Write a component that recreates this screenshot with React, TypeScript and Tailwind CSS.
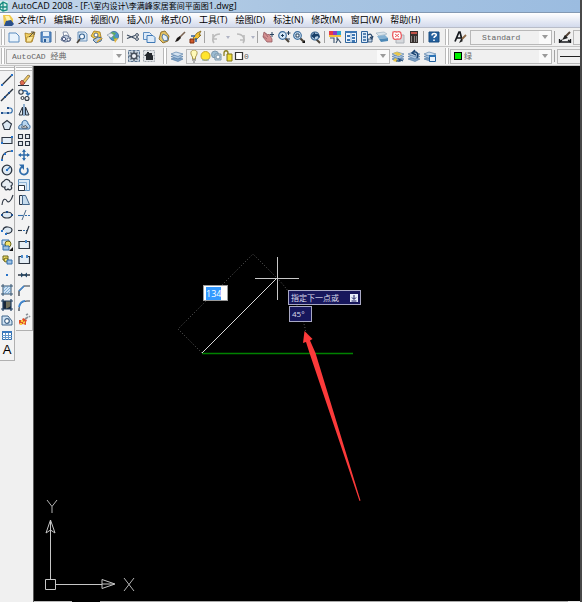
import { useEffect, useRef, type ReactNode } from 'react'

// ─────────────────────────────────────────────────────────────────────────
// Classic CAD workspace: title, menu bar, two toolbar rows, the draw / modify
// palettes down the left side and the model space canvas.
// ─────────────────────────────────────────────────────────────────────────

const MENUS = [
  '文件(F)', '编辑(E)', '视图(V)', '插入(I)', '格式(O)', '工具(T)',
  '绘图(D)', '标注(N)', '修改(M)', '窗口(W)', '帮助(H)',
]

const BLUE = '#2f6cab'
const INK = '#2b3440'
const PALE = '#cfe2f3'

const LAYERS = (
  <>
    <path d="M1 10l5-2 7 2-5 2.500z" fill="#7fa3c7" stroke="#47729f" strokeWidth=".6" />
    <path d="M1 7.500l5-2 7 2-5 2.500z" fill="#a9c4de" stroke="#47729f" strokeWidth=".6" />
    <path d="M1 5l5-2 7 2-5 2.500z" fill="#d3e2f0" stroke="#47729f" strokeWidth=".6" />
  </>
)

const LENS = (
  <>
    <path d="M8 8l4 4" stroke="#4c453b" strokeWidth="2.200" />
    <circle cx="5.500" cy="5.500" r="3.800" fill="#d6e8f6" stroke="#3d6e9e" strokeWidth="1.200" />
  </>
)

// Every drawing uses a 14 x 14 box.
const ICONS: Record<string, ReactNode> = {
  新建: <path d="M2 3h7l3 3v6H2z" fill="#e9f3fc" stroke="#5b8cc0" />,
  打开: (
    <>
      <path d="M2 3l4 1 6-2-3 10-6 0z" fill="#f0cf62" stroke="#a37a1a" strokeWidth=".8" />
      <path d="M4 7l7-1-3 6H3z" fill="#fbe79a" stroke="#a37a1a" strokeWidth=".7" />
      <path d="M6 7l5-5M8 2h3v3" stroke="#5a5340" fill="none" />
    </>
  ),
  保存: (
    <>
      <path d="M2 2h10v10H2z" fill="#5f90c8" stroke="#3b6ca5" />
      <path d="M4 2h6v4H4z" fill="#e7f0f8" />
      <path d="M4 8h6v4H4z" fill="#c5d8ea" />
      <path d="M5 9h2v3H5z" fill="#2b5d96" />
    </>
  ),
  打印: (
    <>
      <path d="M4 2l4 0 2 4-5 1z" fill="#fff" stroke="#6c7b98" strokeWidth=".8" />
      <path d="M3 7l4-2 5 3-1 3-5 1-4-2z" fill="#c4cfdf" stroke="#566787" strokeWidth=".9" />
      <circle cx="5" cy="9" r="1.700" fill="#eef" stroke="#4f5f80" />
      <circle cx="9.500" cy="9.500" r="1.500" fill="#fff" stroke="#4f5f80" />
    </>
  ),
  打印预览: (
    <>
      <path d="M3 2h7l2 2v7H3z" fill="#dbe9f6" stroke="#6b91b8" />
      <circle cx="7" cy="6.500" r="2.500" fill="#f5faff" stroke="#34628f" strokeWidth="1.100" />
      <path d="M5 9l-3 4" stroke="#4c453b" strokeWidth="1.700" />
    </>
  ),
  发布: (
    <>
      <path d="M4 1l6 1 1 5-6 2-4-3z" fill="#f4cc4a" stroke="#a07618" strokeWidth=".8" />
      <circle cx="6" cy="5" r="2" fill="#fff" stroke="#576b84" />
      <path d="M3 10l5-3 4 1-1 3-5 2z" fill="#b3c8dd" stroke="#3c5f84" strokeWidth=".9" />
      <path d="M7 12l5-4" stroke="#e3aa2a" strokeWidth="1.500" />
    </>
  ),
  三维DWF: (
    <>
      <circle cx="8" cy="6" r="4.600" fill="#4d94ca" stroke="#2d628f" strokeWidth=".7" />
      <path d="M6 2l4 1-2 3 3 3-3 1-1-3-3-2z" fill="#5fae5b" />
      <path d="M1 5l4-2 3 2-3 3z" fill="#e7edf3" stroke="#7d8b99" strokeWidth=".6" />
      <path d="M8 9l4-1-3 5z" fill="#e6b53c" />
    </>
  ),
  剪切: (
    <>
      <path d="M1 5l8 3.500M1 8.500l8-3" stroke="#39495e" strokeWidth="1.100" />
      <circle cx="11" cy="5" r="1.400" fill="none" stroke="#39495e" />
      <circle cx="11" cy="9" r="1.400" fill="none" stroke="#39495e" />
    </>
  ),
  复制到剪贴板: (
    <>
      <path d="M1.500 2.500h6l2 2v5h-8z" fill="#dceaf8" stroke="#5b8cc0" />
      <path d="M5 5.500h6l2 2v5H5z" fill="#dceaf8" stroke="#3f78b5" />
    </>
  ),
  粘贴: (
    <>
      <path d="M4 2l4-1 4 5-1 5-5 2-4-4z" fill="#e3c264" stroke="#8a6a25" strokeWidth=".9" />
      <path d="M6 4l4 2 1 4-4 1-2-4z" fill="#e6f0fa" stroke="#47729f" strokeWidth=".9" />
    </>
  ),
  特性匹配: (
    <>
      <path d="M7 7l5-5" stroke="#7b6554" strokeWidth="1.600" />
      <path d="M2 12l2-4 3-2 1 2-3 3z" fill="#1e1a18" />
    </>
  ),
  块编辑器: (
    <>
      <path d="M2 9h4v4H2z" fill="#d35a2a" stroke="#7b2c10" />
      <path d="M5 8l4-5 4-2-2 4h2L8 10z" fill="#f3c333" stroke="#7e6215" strokeWidth=".8" />
      <path d="M3 6h4M8 8v4" stroke="#2f5f9d" strokeWidth="1.500" />
    </>
  ),
  放弃: <path d="M5 13c-3-4 0-9 6-9M4 4v5h4" fill="none" stroke="#bcbcbc" strokeWidth="1.600" />,
  重做: <path d="M9 13c3-4 0-9-6-9M10 5v5H6" fill="none" stroke="#bcbcbc" strokeWidth="1.600" />,
  实时平移: (
    <>
      <path d="M3 2l4 3 1-1 3 5 0 3-5 0-4-5z" fill="#d49090" stroke="#955c62" strokeWidth=".8" />
      <path d="M11 2v5M9 4.500h4" stroke="#26435f" />
      <path d="M4 3l3 4M2 6l4 3" stroke="#a66970" />
    </>
  ),
  实时缩放: (
    <>
      {LENS}
      <path d="M4 5.500h3M5.500 4v3M9.500 3h4M11.500 1v4M10 9h3" stroke="#1d3d5c" />
    </>
  ),
  窗口缩放: (
    <>
      {LENS}
      <path d="M4 4h3v3H4z" fill="#fff" stroke="#1d3d5c" />
      <path d="M13 10v3h-3z" fill="#111" />
    </>
  ),
  缩放上一个: (
    <>
      <path d="M8 9l4 4" stroke="#4c453b" strokeWidth="2" />
      <circle cx="7" cy="6" r="4" fill="#b9d1e6" stroke="#35618c" strokeWidth="1.200" />
      <path d="M3 6l4-4v2c3-1 5 1 5 4-2-2-3-2-5-1v2z" fill="#183f68" />
    </>
  ),
  特性: (
    <>
      <path d="M1 1h4v4H1z" fill="#e83c45" />
      <path d="M5 1h4v4H5z" fill="#8a3bc5" />
      <path d="M9 1h4v4H9z" fill="#2da8d0" />
      <path d="M1 5h12v2H1z" fill="#f4c23c" />
      <path d="M2 8h4v5M9 7v3M8 13l2-4 3 4" fill="none" stroke="#3a536e" strokeWidth="1.100" />
    </>
  ),
  设计中心: (
    <>
      <path d="M1.500 1.500h11v11h-11z" fill="#eef5fc" stroke="#2f649c" />
      <path d="M1 1h12v2H1z" fill="#3d77b4" />
      <path d="M3 5h3v2H3zM3 9h3v2H3zM8 4h3v2H8zM8 7h3v2H8zM8 10h3v2H8z" fill="#3d77b4" />
      <path d="M7 3v10" stroke="#8fb2d5" />
    </>
  ),
  工具选项板: (
    <>
      <path d="M1.500 1.500h6v11h-6z" fill="#dceaf8" stroke="#2f649c" />
      <path d="M3 4h3M3 7h3M3 10h3" stroke="#2f649c" strokeWidth="1.500" />
      <path d="M8 5c3-2 4 0 4 3M10 7l2 2 1-3" fill="none" stroke="#29486b" strokeWidth="1.200" />
      <path d="M8 9h4v3H8z" fill="#c9dbed" stroke="#29486b" strokeWidth=".8" />
    </>
  ),
  图纸集管理器: (
    <>
      <path d="M1 3l8-1 3 2-8 2z" fill="#d9e4eb" stroke="#93a9ba" strokeWidth=".6" />
      <path d="M2 6l8-1 3 3-9 1z" fill="#84b1d2" />
      <path d="M4 9l9-1v3l-7 1z" fill="#4c88b6" />
    </>
  ),
  标记集管理器: (
    <>
      <path d="M5 5h8v8H5z" fill="#d6d9dd" stroke="#adb2b8" />
      <path d="M2 2c2-1 3 0 4 0 2-1 4 0 4 2 1 2 0 3 0 4-1 2-3 1-4 1-2 1-4 0-4-2-1-2 0-3 0-5z" fill="#fff" stroke="#ea5a5f" strokeWidth="1.300" />
      <path d="M4 4l4 3M8 4L4 7" stroke="#ea5a5f" />
    </>
  ),
  快速计算器: (
    <>
      <path d="M3 1h8v12H3z" fill="#37302e" />
      <path d="M4 2h6v2H4z" fill="#c25147" />
      <path d="M4 7h1M7 7h1M9 7h1M4 9h1M7 9h1M9 9h1M4 11h1M7 11h1M9 11h1" stroke="#ddd" strokeWidth="1.200" />
    </>
  ),
  帮助: (
    <>
      <path d="M2 2h10v10H2z" fill="#24619e" stroke="#174a7e" />
      <path d="M5 5.500c0-3 4.500-2.500 4.300-.5 0 1.500-2.300 1-2.300 3M7 9.500V11" fill="none" stroke="#fff" strokeWidth="1.500" />
    </>
  ),
  文字样式: (
    <>
      <path d="M2 11.500L6 2h1l2 8M3 8h5" fill="none" stroke="#15181d" strokeWidth="1.700" />
      <path d="M9 9l4-4" stroke="#8d6a49" strokeWidth="1.800" />
      <path d="M6 13l2-4 2 2z" fill="#222" />
    </>
  ),
  标注样式: (
    <>
      <path d="M1 12h12M1.500 9v4M12.500 9v4M1 12l3-2M13 12l-3-2" stroke="#17191c" strokeWidth="1.300" />
      <path d="M7 7l5-5" stroke="#544336" strokeWidth="2" />
      <path d="M4 10l3-5 3 3z" fill="#222" />
    </>
  ),
  工作空间设置: (
    <>
      <path d="M1.500 1.500h11v11h-11z" fill="#c6d4e0" stroke="#5a7490" strokeDasharray="3 1" />
      <circle cx="7" cy="7" r="2.800" fill="#edf1f5" stroke="#47515c" strokeWidth="1.500" />
      <path d="M7 2v2M7 10v2M2 7h2M10 7h2M3.500 3.500L5 5M9 9l1.500 1.500M10.500 3.500L9 5M5 9l-1.500 1.500" stroke="#47515c" strokeWidth="1.200" />
    </>
  ),
  我的工作空间: (
    <>
      <path d="M1.500 1.500h11v11h-11z" fill="#e2e5e8" stroke="#a4aab1" strokeDasharray="2 1" />
      <path d="M2 7l3-3v-1h2v1l3 0v2l2 1h-1v4H4V7z" fill="#23272c" />
    </>
  ),
  图层特性: LAYERS,
  置为当前: (
    <>
      {LAYERS}
      <path d="M2 4l4-1 5 2-4 2z" fill="#e9c648" />
      <path d="M2 12l2-3 2 1 0 3z" fill="#e9c648" />
      <path d="M5 12h4l-1-2 4 2" fill="none" stroke="#294e77" strokeWidth="1.200" />
    </>
  ),
  上一个图层: (
    <>
      {LAYERS}
      <path d="M10 9c2-4 0-7-4-6M8 1L5 4l4 2" fill="none" stroke="#1d4775" strokeWidth="1.500" />
    </>
  ),
  图层状态: (
    <>
      {LAYERS}
      <path d="M6.500 6.500h6v6h-6z" fill="#eaf3fb" stroke="#26639f" />
      <path d="M6 6h7v2H6z" fill="#2c73b5" />
    </>
  ),
  直线: (
    <>
      <path d="M2 12L12 2" stroke={INK} strokeWidth="1.200" />
      <path d="M1 11h2v2H1zM11 1h2v2h-2z" fill="#2772c8" />
    </>
  ),
  构造线: (
    <>
      <path d="M1 13L13 1" stroke={INK} strokeWidth="1.400" />
      <path d="M4 8h2v2H4zM8 4h2v2H8z" fill="#1f4f8c" />
    </>
  ),
  多段线: (
    <>
      <path d="M2 10h8c3 0 3-5 0-5H8" fill="none" stroke={BLUE} strokeWidth="1.200" />
      <path d="M1 9h2v2H1zM7 9h2v2H7zM7 4h2v2H7z" fill="#1f4f8c" />
    </>
  ),
  正多边形: <path d="M7 2.500l4.500 3.500-2 5.500h-5L2.500 6z" fill="#dce8f2" stroke={INK} strokeWidth="1.100" />,
  矩形: (
    <>
      <path d="M2 4.500h10v6H2z" fill="#e4eef7" stroke={INK} strokeWidth="1.100" />
      <path d="M1 9h2v2H1zM11 3h2v2h-2z" fill="#2772c8" />
    </>
  ),
  圆弧: (
    <>
      <path d="M2 12c0-6 4-9 10-9" fill="none" stroke={INK} strokeWidth="1.200" />
      <path d="M1 11h2v2H1zM4 5h2v2H4zM11 2h2v2h-2z" fill="#2772c8" />
    </>
  ),
  圆: (
    <>
      <circle cx="7" cy="7" r="4.800" fill="#dce8f2" stroke={INK} strokeWidth="1.300" />
      <path d="M7 7l3-3" stroke={BLUE} strokeWidth="1.200" />
      <path d="M6 6h2v2H6z" fill="#2772c8" />
    </>
  ),
  修订云线: (
    <path
      d="M4 3c2-3 6-1 6 1 3 0 3 3 1 4 2 3-1 5-3 3-2 2-4 0-3-2-4 1-5-4-1-6z"
      fill="#e6edf3"
      stroke={INK}
      strokeWidth="1.200"
    />
  ),
  样条曲线: <path d="M2 12c1-8 4-6 5-4s4 1 6-6" fill="none" stroke={INK} strokeWidth="1.100" />,
  椭圆: (
    <>
      <ellipse cx="7" cy="7" rx="4.800" ry="3" fill="#dce8f2" stroke={INK} strokeWidth="1.200" />
      <path d="M1 6h2v2H1zM6 3h2v2H6zM11 6h2v2h-2z" fill="#1f4f8c" />
    </>
  ),
  椭圆弧: (
    <>
      <path d="M3 7c1-5 9-3 9 0 0 3-4 4-6 3" fill="#dce8f2" stroke={INK} strokeWidth="1.200" />
      <path d="M1 7h2v2H1zM5 10h2v2H5z" fill="#2772c8" />
    </>
  ),
  插入块: (
    <>
      <path d="M2 2h7v5H2z" fill="#cfe2f3" stroke={BLUE} />
      <circle cx="8" cy="6" r="3" fill="#f5e36b" stroke="#686319" />
      <path d="M3 8h6v4H3z" fill="#9ec2e3" stroke={BLUE} />
      <path d="M13 9v4H9z" fill="#111" />
    </>
  ),
  创建块: (
    <>
      <path d="M3 3h5v4H3z" fill="#f5e36b" stroke="#686319" />
      <circle cx="6" cy="7" r="2" fill="#f5e36b" stroke="#686319" />
      <path d="M7 7h5v4H7z" fill="#9ec2e3" stroke={BLUE} />
    </>
  ),
  点: <path d="M6 6h2v2H6z" fill="#2772c8" />,
  图案填充: (
    <>
      <path d="M3 3h8v8H3z" fill={PALE} />
      <path d="M3 1v12M11 1v12M1 3h12M1 11h12" stroke="#34536f" />
      <path d="M3 6l3-3M3 9l6-6M4 11l7-7M7 11l4-4" stroke="#6c9fcb" strokeWidth=".8" />
    </>
  ),
  渐变色: (
    <>
      <path d="M3 3h8v8H3z" fill="#1b2737" />
      <path d="M6 3h5v5L6 11z" fill="#72705c" />
      <path d="M3 1v12M11 1v12M1 3h12M1 11h12" stroke="#1f3d5f" strokeWidth="1.200" />
    </>
  ),
  面域: (
    <>
      <path d="M2 3h6l4 5v4H2z" fill={PALE} stroke="#3d6288" />
      <circle cx="7" cy="8" r="2.300" fill="#fff" stroke="#3d6288" strokeWidth="1.200" />
    </>
  ),
  表格: (
    <>
      <path d="M2.500 3.500h9v8h-9z" fill="#fff" stroke={BLUE} />
      <path d="M2 3h10v2H2z" fill="#3b79bd" />
      <path d="M5.500 5v7M8.500 5v7M2 7.500h10M2 9.500h10" stroke="#6497ca" />
    </>
  ),
  删除: (
    <>
      <path d="M5 9l6-7 2 1-6 8z" fill="#f0ca65" stroke="#7c653b" strokeWidth=".8" />
      <path d="M3 9l2-2 3 3-2 2H4z" fill="#dd6a50" stroke="#87362a" strokeWidth=".7" />
      <path d="M1 12.500h11" stroke={INK} />
    </>
  ),
  复制: (
    <>
      <circle cx="4" cy="4" r="2.200" fill="#eee" stroke={INK} strokeWidth="1.100" />
      <circle cx="5.500" cy="10" r="1.500" fill="#eee" stroke={INK} />
      <circle cx="10" cy="10.500" r="2" fill="#eee" stroke={INK} strokeWidth="1.100" />
      <path d="M6 3c4-1 5 1 5 4M9 5l2 2 2-2" fill="none" stroke={BLUE} strokeWidth="1.400" />
    </>
  ),
  镜像: (
    <>
      <path d="M5.500 4v8H2z" fill="#e5ebf0" stroke={INK} />
      <path d="M8.500 4v8H12z" fill="#b6cde2" stroke={INK} />
      <path d="M7 1v12" stroke={BLUE} />
    </>
  ),
  偏移: (
    <>
      <path d="M2 11c-1-3 1-5 3-4-1-6 6-6 6-1 3 1 2 5 1 5z" fill="#b9d5ee" stroke="#2c6299" />
      <path d="M5 10c-1-2 1-3 2-1 0-2 3-2 2 0 2 0 2 1 1 1z" fill="#fff" stroke={INK} strokeWidth=".8" />
    </>
  ),
  阵列: (
    <path
      d="M1.500 1.500h4v4h-4zM8.500 1.500h4v4h-4zM1.500 8.500h4v4h-4zM8.500 8.500h4v4h-4z"
      fill="#e5ebf0"
      stroke={INK}
      strokeWidth="1.100"
    />
  ),
  移动: (
    <>
      <path d="M7 2v10M2 7h10" stroke={BLUE} strokeWidth="1.500" />
      <path d="M7 1l2 3H5zM7 13l2-3H5zM1 7l3-2v4zM13 7l-3-2v4z" fill={BLUE} />
    </>
  ),
  旋转: (
    <>
      <path d="M5 4a4 4 0 1 0 5 1" fill="none" stroke={BLUE} strokeWidth="1.800" />
      <path d="M2 1.500h5V7z" fill={BLUE} />
    </>
  ),
  缩放: (
    <>
      <path d="M1.500 1.500h11v11h-11z" fill="#dceaf6" stroke="#5d8fbd" />
      <path d="M1.500 7.500h6v5h-6z" fill="#fff" stroke={INK} />
      <path d="M1.500 4.500h8v8" fill="none" stroke="#8fb4d6" />
    </>
  ),
  拉伸: (
    <>
      <path d="M2.500 2.500h3v9h-3z" fill="#e5ebf0" stroke={INK} />
      <path d="M5.500 2.500h3l4 9h-7z" fill="#c7dced" stroke="#44678b" />
    </>
  ),
  修剪: (
    <>
      <path d="M1 7.500h5" stroke={BLUE} strokeWidth="1.100" />
      <path d="M8 7.500h5" stroke={BLUE} strokeDasharray="2 1" />
      <path d="M5 12l4-10" stroke="#4b6a89" />
    </>
  ),
  延伸: (
    <>
      <path d="M1 7.500h4" stroke={INK} strokeWidth="1.100" />
      <path d="M6 7.500h4" stroke={BLUE} strokeDasharray="2 1" />
      <path d="M9 11l3-8" stroke={INK} strokeWidth="1.200" />
    </>
  ),
  打断于点: (
    <>
      <path d="M2 3.500h10.500v7H2z" fill="#e5eef6" stroke={INK} strokeWidth="1.200" />
      <path d="M8 2h2v3H8z" fill="#4b8acb" />
    </>
  ),
  打断: (
    <>
      <path d="M4 3.500H2v7h10.500v-7H10" fill="#e5eef6" stroke={INK} strokeWidth="1.200" />
      <path d="M4 2h2v3H4zM9 2h2v3H9z" fill="#4b8acb" />
    </>
  ),
  合并: (
    <>
      <path d="M1 7h12" stroke={INK} strokeWidth="1.500" />
      <path d="M4 4.500L7 7 4 9.500zM10 4.500L7 7l3 2.500z" fill="#254765" />
    </>
  ),
  倒角: (
    <>
      <path d="M2 13V8l5-5h6" fill="none" stroke={INK} strokeWidth="1.200" />
      <path d="M2 8l5-5" stroke="#3f86cf" strokeWidth="1.500" />
    </>
  ),
  圆角: (
    <>
      <path d="M2 13v-2c0-5 3-8 8-8h3" fill="none" stroke={INK} strokeWidth="1.200" />
      <path d="M2 9c1-4 3-6 6-6" fill="none" stroke="#3f86cf" strokeWidth="1.900" />
    </>
  ),
  分解: (
    <>
      <path d="M2 7l3 0 1-2 2 1 2 1-1 2 0 3-3-1-3 1-1-2z" fill="#e14c26" />
      <path d="M4 7l2 0 0 2-2 0zM6 9l2-1 0 2-2 1zM3 10h2v2H3z" fill="#f8cf3e" />
      <path d="M8 6l3-2M12 4l1-1M9 2l2-1" stroke="#8a9097" strokeWidth="1.700" />
    </>
  ),
}

function Icon({ name }: { name: string }) {
  return (
    <svg viewBox="0 0 14 14" className="block size-[14px] shrink-0" aria-hidden="true">
      {ICONS[name]}
    </svg>
  )
}

function ToolButton({ name }: { name: string }) {
  return (
    <button type="button" aria-label={name} className="block size-[14px] shrink-0">
      <Icon name={name} />
    </button>
  )
}

function Grip() {
  return <div className="mx-px h-4 w-[4px] shrink-0 border-x border-[#b9b9b9] bg-white" />
}

function Divider() {
  return <div className="mx-[2px] h-3 w-px shrink-0 bg-[#a3a3a3]" />
}

function Chevron() {
  return (
    <span className="pointer-events-none flex h-full w-3 shrink-0 items-center justify-center bg-[#fafafa]">
      <svg viewBox="0 0 6 4" className="h-[4px] w-[6px]" aria-hidden="true">
        <path d="M0 0h6L3 4z" fill="#9a9a9a" />
      </svg>
    </span>
  )
}

function DropMark() {
  return (
    <svg viewBox="0 0 4 3" className="h-[3px] w-[4px] shrink-0" aria-hidden="true">
      <path d="M0 0h4L2 3z" fill="#b0b4c4" />
    </svg>
  )
}

function Combo({ label, value, className, children }: {
  label: string
  value: string
  className: string
  children?: ReactNode
}) {
  return (
    <div className={`flex h-[15px] shrink-0 items-center overflow-hidden border border-[#b8b8b8] bg-[#f0f0f0] ${className}`}>
      {children}
      <select
        aria-label={label}
        defaultValue={value}
        className="h-full min-w-0 flex-1 appearance-none bg-transparent font-['Liberation_Mono','Noto_Sans_CJK_SC',monospace] text-[8px] leading-[13px] text-[#666] outline-none"
      >
        <option>{value}</option>
      </select>
      <Chevron />
    </div>
  )
}

function LayerFlags() {
  return (
    <svg viewBox="0 0 56 14" className="h-[14px] w-14 shrink-0" aria-hidden="true">
      <path d="M4.500 8C1 3 4 1 6 1s5 2 1.500 7v2h-3z" fill="#fff9b8" stroke="#a8964d" />
      <path d="M4 11h4M5 13h2" stroke="#707070" />
      <circle cx="17.500" cy="7" r="4.500" fill="#ffe52e" stroke="#c9a427" />
      <path d="M14 11h7" stroke="#7ba2bf" />
      <circle cx="27" cy="5.500" r="3.500" fill="#9bbbd2" stroke="#7c98ae" />
      <path d="M27 5h6v6h-6z" fill="#cfdde7" stroke="#7895ab" />
      <circle cx="30" cy="8" r="2" fill="#fff" stroke="#7895ab" />
      <path d="M36 7V4c0-3 4-3 4 0v3" fill="none" stroke="#8a7e1e" strokeWidth="1.300" />
      <path d="M39 5h5v7h-5z" fill="#f0df37" stroke="#827419" />
      <path d="M47.500 3.500h7v7h-7z" fill="#fff" stroke="#333" strokeWidth="1.200" />
    </svg>
  )
}

const DRAW_TOOLS = [
  '直线', '构造线', '多段线', '正多边形', '矩形', '圆弧', '圆', '修订云线', '样条曲线',
  '椭圆', '椭圆弧', '插入块', '创建块', '点', '图案填充', '渐变色', '面域', '表格',
]

const MODIFY_TOOLS = [
  '删除', '复制', '镜像', '偏移', '阵列', '移动', '旋转', '缩放', '拉伸',
  '修剪', '延伸', '打断于点', '打断', '合并', '倒角', '圆角', '分解',
]

function Group({ names, className }: { names: string[]; className: string }) {
  return (
    <div className={`flex shrink-0 items-center justify-between ${className}`}>
      {names.map(n => <ToolButton key={n} name={n} />)}
    </div>
  )
}

function Palette({ names, className, children }: { names: string[]; className: string; children?: ReactNode }) {
  return (
    <div className={`flex flex-col items-center border-r border-b border-[#b0b0b0] bg-[#f3f3f3] pb-[3px] ${className}`}>
      <div className="mt-px mb-px h-[4px] w-full border-y border-[#b9b9b9] bg-white" />
      {names.map(n => (
        <div key={n} className="flex h-[15px] items-center">
          <ToolButton name={n} />
        </div>
      ))}
      {children}
    </div>
  )
}

function ModelSpace() {
  const lengthRef = useRef<HTMLInputElement>(null)

  // The dynamic length field opens with its value selected.
  useEffect(() => {
    lengthRef.current?.focus()
    lengthRef.current?.select()
  }, [])

  return (
    <main className="relative flex flex-1 flex-col overflow-hidden border-l border-[#5a5a5a] bg-black">
      <svg viewBox="0 0 546 535" className="h-[535px] w-[546px] shrink-0" fill="none" aria-hidden="true">
        {/* tracking outline */}
        <path d="M168 287L144 263L219 188L243 212" stroke="#5c5c5c" strokeDasharray="1 2" />
        <path d="M243 212Q268 238 272 268" stroke="#666" strokeDasharray="1 2" />
        {/* drawn segments */}
        <path d="M168 287.500h151" stroke="#008200" strokeWidth="1.500" />
        <path d="M168 287L243 212" stroke="#d8d8d8" />
        {/* cursor */}
        <path d="M221 212.500h44M243.500 191v43" stroke="#c8c8c8" />
        {/* pointer */}
        <path d="M270.500 265L278.500 273L276 274.500L281.500 287L326.500 434.500L325.500 435L275.500 287L272 276L269 277z" fill="#fb3a3a" />
        {/* UCS icon */}
        <path d="M11.500 513.500h10v10h-10zM16.500 513V467M22 518.500h46" stroke="#c6c6c6" />
        <path d="M12 467L16.500 454L21 467L16.500 464zM16.500 454v13M68 513.500L81 518L68 522.500zM68 518h12" stroke="#c6c6c6" />
        <path d="M13 434L18 440.500L23 434M18 440.500V447M90 512L100 525M100 512L90 525" stroke="#b4b4b4" />
      </svg>

      <input
        ref={lengthRef}
        aria-label="长度"
        defaultValue="134"
        className="absolute top-[219px] left-[169px] h-4 w-[25px] border border-[#999] bg-white px-[2px] font-['Open_Sans',sans-serif] text-[9px] leading-[13px] text-black outline-none selection:bg-[#3399ff] selection:text-white"
      />
      <div className="absolute top-[224px] left-[254px] flex h-[15px] w-[73px] items-center justify-between border border-[#a8a8c4] bg-[#17175c] px-[2px] text-[8px] leading-none text-[#dcdcea]">
        指定下一点或
        <svg viewBox="0 0 8 8" className="size-[8px]" aria-hidden="true">
          <path d="M0 0h8v8H0z" fill="#e8effb" />
          <path d="M4 1v4M2 3.500l2 2 2-2M1.500 7h5" fill="none" stroke="#17175c" />
        </svg>
      </div>
      <div className="absolute top-[240px] left-[255px] flex h-4 w-[23px] items-center border border-[#a8a8c4] bg-[#17175c] pl-[2px] text-[8px] leading-none text-[#dcdcea]">
        45°
      </div>

      {/* upper edge of the layout tab strip */}
      <div className="mt-auto flex h-px">
        <span className="w-[38px] bg-[#b9b9b9]" />
        <span className="w-7" />
        <span className="flex-1 bg-[#a9a9a9]" />
        <span className="w-3 bg-[#e8e8e8]" />
      </div>
    </main>
  )
}

export default function App() {
  return (
    <div className="flex min-h-screen overflow-hidden bg-[#484848] pr-[2px] font-['Open_Sans','Noto_Sans_CJK_SC',sans-serif] text-black">
      <div className="flex min-w-0 flex-1 flex-col overflow-hidden bg-[#f0f0f0]">
        <header className="flex h-[13px] items-center gap-1 overflow-hidden border-b border-[#8399b3] bg-linear-to-r from-[#c3d6ea] via-[#a9c5e2] to-[#9bbce0]">
          <svg viewBox="0 0 8 11" className="h-[11px] w-[8px] shrink-0" aria-hidden="true">
            <path d="M0 0h8v11H0z" fill="#d7efe9" />
            <path d="M0 4l3-3 4 2v6l-4 1-3-2zM3 1v9M0 6h7" fill="none" stroke="#178a80" strokeWidth="1.300" />
          </svg>
          <h1 className="text-[9px] leading-[12px] whitespace-nowrap">
            AutoCAD 2008 - [F:\<span className="text-[8px]">室内设计</span>\
            <span className="text-[8px]">李满峰家居套间平面图</span>1.dwg]
          </h1>
        </header>

        <nav className="flex h-[15px] items-center gap-[8px] overflow-hidden border-b border-[#b9bdc9] bg-linear-to-b from-white to-[#d3daec] pl-[3px]">
          <svg viewBox="0 0 11 12" className="-mr-[4px] h-3 w-[11px] shrink-0" aria-hidden="true">
            <path d="M0 1h7l3 4v6H1z" fill="#eec84c" />
            <path d="M2 2l4 0 2 4-4 1z" fill="#fff3ac" />
            <path d="M3 7l5-1 3 4-2 2H1z" fill="#294f8b" />
          </svg>
          {MENUS.map(m => (
            <button key={m} type="button" className="shrink-0 text-[9px] leading-[12px] whitespace-nowrap">
              {m}
            </button>
          ))}
        </nav>

        <div className="flex h-[19px] items-center overflow-hidden border-b border-[#c4c4c4]">
          <Grip />
          <Group names={['新建', '打开', '保存']} className="ml-px w-[46px]" />
          <Divider />
          <Group names={['打印', '打印预览', '发布', '三维DWF']} className="ml-px w-[61px]" />
          <Divider />
          <Group names={['剪切', '复制到剪贴板', '粘贴', '特性匹配', '块编辑器']} className="ml-px w-[76px]" />
          <Divider />
          <div className="ml-[2px] flex w-[46px] shrink-0 items-center justify-between">
            <ToolButton name="放弃" />
            <DropMark />
            <ToolButton name="重做" />
            <DropMark />
          </div>
          <Divider />
          <Group names={['实时平移', '实时缩放', '窗口缩放', '缩放上一个']} className="ml-px w-[61px]" />
          <Divider />
          <Group
            names={['特性', '设计中心', '工具选项板', '图纸集管理器', '标记集管理器', '快速计算器']}
            className="ml-px w-[93px]"
          />
          <Divider />
          <Group names={['帮助']} className="mx-px w-[16px]" />
          <Grip />
          <Group names={['文字样式']} className="mx-[3px] w-[14px]" />
          <Combo label="文字样式控制" value="Standard" className="w-[82px] pl-[11px]" />
          <Divider />
          <Group names={['标注样式']} className="mx-px w-[14px]" />
          <Combo label="标注样式控制" value="" className="w-[82px]" />
        </div>

        <div className="flex h-[19px] items-center overflow-hidden border-b border-[#c4c4c4]">
          <Grip />
          <Combo label="工作空间" value="AutoCAD 经典" className="w-[120px] pl-[5px]" />
          <Group names={['工作空间设置', '我的工作空间']} className="mr-[6px] ml-px w-[29px]" />
          <Grip />
          <Group names={['图层特性']} className="mx-[2px] w-[14px]" />
          <Combo label="图层" value="0" className="w-[204px] pl-px">
            <LayerFlags />
          </Combo>
          <Group names={['置为当前', '上一个图层', '图层状态']} className="mr-[7px] ml-px w-[46px]" />
          <Grip />
          <Combo label="颜色" value="绿" className="w-[102px] gap-[2px] pl-[3px]">
            <span className="size-[8px] shrink-0 border border-black bg-[#00f000]" />
          </Combo>
          <Divider />
          <div className="flex h-[15px] flex-1 items-center border border-r-0 border-[#b8b8b8] pl-[2px]">
            <span className="h-px flex-1 bg-[#222]" />
          </div>
        </div>

        <div className="flex flex-1">
          <aside className="flex w-[33px] shrink-0 items-start gap-px">
            <Palette names={DRAW_TOOLS} className="w-[15px]">
              <button
                type="button"
                aria-label="多行文字"
                className="font-['Liberation_Sans',sans-serif] text-[13px] leading-[15px]"
              >
                A
              </button>
            </Palette>
            <Palette names={MODIFY_TOOLS} className="w-[17px]" />
          </aside>
          <ModelSpace />
        </div>
      </div>
    </div>
  )
}
